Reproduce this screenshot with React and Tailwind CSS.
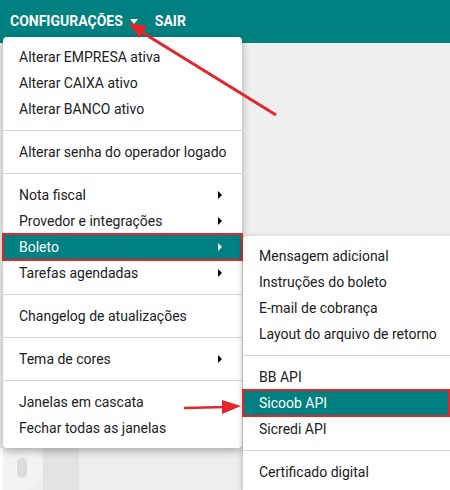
import React from 'react';

const mainGroups = [
    [
        { label: 'Alterar EMPRESA ativa' },
        { label: 'Alterar CAIXA ativo' },
        { label: 'Alterar BANCO ativo' }
    ],
    [{ label: 'Alterar senha do operador logado' }],
    [
        { label: 'Nota fiscal', sub: true },
        { label: 'Provedor e integrações', sub: true },
        { label: 'Boleto', sub: true, active: true },
        { label: 'Tarefas agendadas', sub: true }
    ],
    [{ label: 'Changelog de atualizações' }],
    [{ label: 'Tema de cores', sub: true }],
    [
        { label: 'Janelas em cascata' },
        { label: 'Fechar todas as janelas' }
    ]
];

const subGroups = [
    [
        { label: 'Mensagem adicional' },
        { label: 'Instruções do boleto' },
        { label: 'E-mail de cobrança' },
        { label: 'Layout do arquivo de retorno' }
    ],
    [
        { label: 'BB API' },
        { label: 'Sicoob API', active: true, short: true },
        { label: 'Sicredi API' }
    ],
    [{ label: 'Certificado digital' }]
];

const MenuItem = ({ item }) => (
    <div
        className={`relative h-[26px] flex items-center pl-4 pr-5 text-[14px] ${
            item.active ? 'bg-[#008080] text-white' : 'text-[#212121]'
        } ${item.short ? 'mr-[4px]' : ''}`}
    >
        <span className="flex-1 whitespace-nowrap">{item.label}</span>
        {item.sub && (
            <span
                className={`w-0 h-0 border-y-[4px] border-y-transparent border-l-[4px] ${
                    item.active ? 'border-l-white' : 'border-l-black'
                }`}
            />
        )}
        {item.active && (
            <span className="absolute -inset-[1px] border-2 border-[#e3262b] pointer-events-none" />
        )}
    </div>
);

const Menu = ({ groups, className }) => (
    <div className={`absolute bg-white py-[7px] ${className}`}>
        {groups.map((group, i) => (
            <div key={i}>
                {i > 0 && <div className="h-px bg-[#d6d6d6] my-2" />}
                {group.map((item) => (
                    <MenuItem key={item.label} item={item} />
                ))}
            </div>
        ))}
    </div>
);

export default function App() {
    return (
        <div
            className="relative w-[450px] h-[490px] overflow-hidden bg-[#efefef]"
            style={{ fontFamily: 'Roboto, "Liberation Sans", sans-serif' }}
        >
            <header className="h-[43px] bg-[#008080] flex items-center pl-[10px] gap-[17px] text-white text-[14px] font-bold">
                <div className="flex items-center gap-[7px]">
                    <span>CONFIGURAÇÕES</span>
                    <span className="w-0 h-0 border-x-[4px] border-x-transparent border-t-[5px] border-t-white" />
                </div>
                <span>SAIR</span>
            </header>

            {/* faded logo bits behind the menu */}
            <div className="absolute left-0 top-[448px] w-[120px] h-[42px] flex">
                <div className="w-[3px] bg-white" />
                <div className="relative w-[40px] bg-[#f3f3f3] rounded-r-[20px]">
                    <div className="absolute left-[14px] top-[10px] w-[10px] h-[20px] rounded-full bg-[#dcdcdc]" />
                </div>
                <div className="w-[36px] bg-[#e3e3e3]" />
            </div>

            <Menu
                groups={mainGroups}
                className="left-[3px] top-[37px] w-[239px] rounded-[4px] shadow-[0_3px_8px_rgba(0,0,0,0.3)] z-10"
            />
            <Menu
                groups={subGroups}
                className="left-[243px] top-[236px] w-[210px] rounded-tl-[4px] shadow-[0_2px_6px_rgba(0,0,0,0.3)] z-20"
            />

            <svg className="absolute inset-0 z-30 pointer-events-none" width="450" height="490">
                <line x1="276" y1="115" x2="140" y2="31" stroke="#e3262b" strokeWidth="3" />
                <polygon points="129,23 147,26 139,38" fill="#e3262b" />
                <line x1="184" y1="408" x2="226" y2="407" stroke="#e3262b" strokeWidth="2.5" />
                <polygon points="241,406 222,400 222,414" fill="#e3262b" />
            </svg>
        </div>
    );
}
